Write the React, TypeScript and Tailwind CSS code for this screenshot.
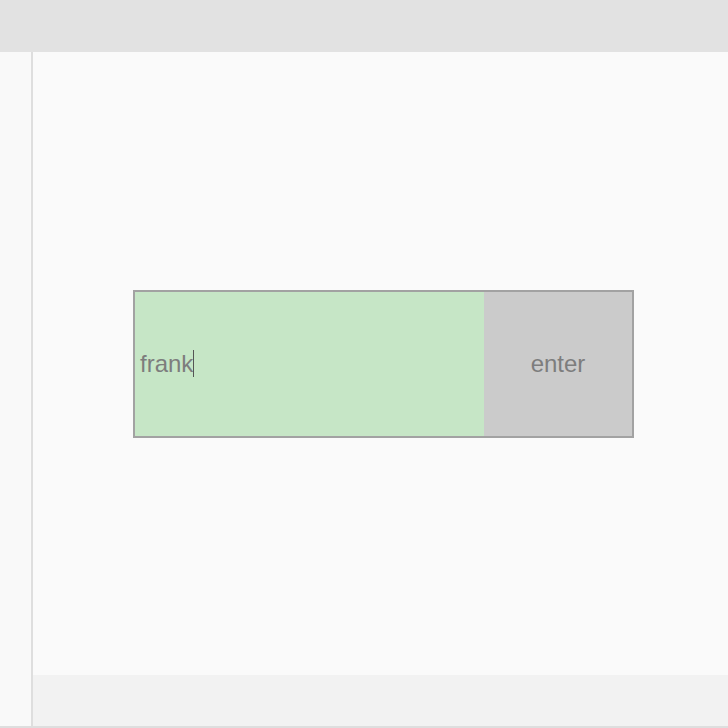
import React from "react";

const App: React.FC = () => {
  return (
    <div
      className="w-[728px] h-[728px] flex flex-col bg-[#fafafa] overflow-hidden"
      style={{ fontFamily: '"Liberation Sans", Arial, sans-serif' }}
    >
      <div className="h-[52px] shrink-0 bg-[#e2e2e2]"></div>
      <div className="flex flex-1">
        <div className="w-[31px] bg-[#f9f9f9]"></div>
        <div className="w-[2px] bg-[#dedede]"></div>
        <div className="flex-1 flex flex-col">
          <div className="flex-1 flex items-center justify-center pl-[6px]">
            <div className="w-[501px] h-[148px] flex border-2 border-[#a2a2a2]">
              <div className="w-[349px] bg-[#c6e6c6] flex items-center pl-[5px] text-[24px] text-[#7d7d7d]">
                frank
                <span className="w-px h-[27px] bg-[#555]"></span>
              </div>
              <div className="flex-1 bg-[#cbcbcb] flex items-center justify-center text-[24px] text-[#7d7d7d]">
                enter
              </div>
            </div>
          </div>
          <div className="h-[51px] bg-[#f2f2f2]"></div>
        </div>
      </div>
      <div className="h-[2px] shrink-0 bg-[#dedede]"></div>
    </div>
  );
};

export default App;
